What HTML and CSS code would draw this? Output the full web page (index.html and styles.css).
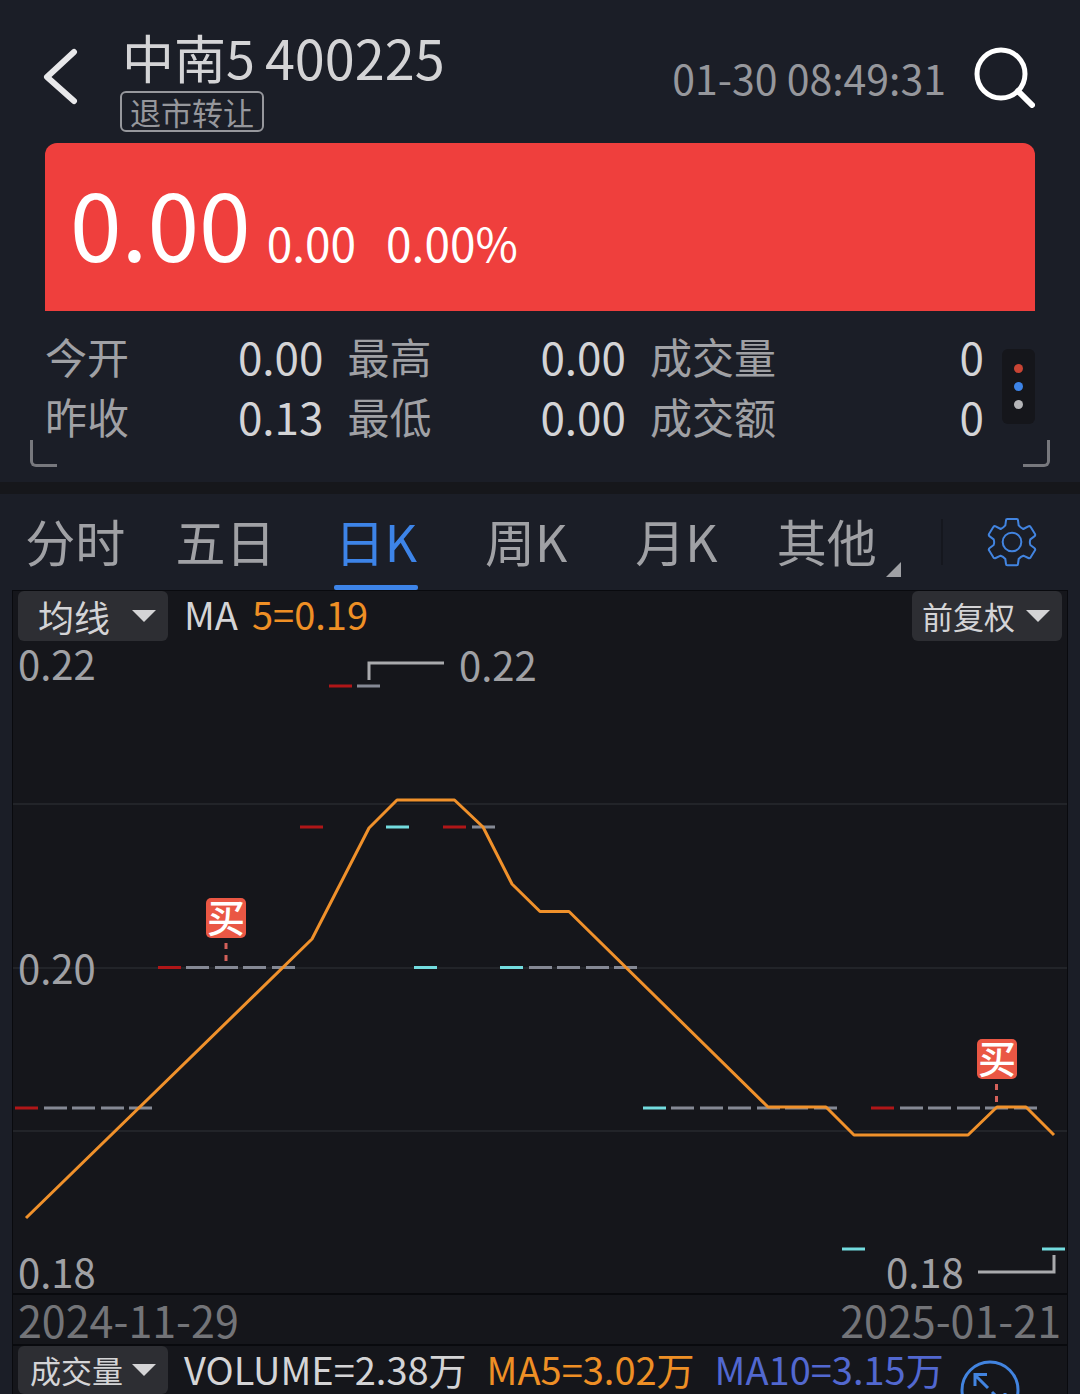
FILE: index.html
```html
<!DOCTYPE html>
<html lang="zh-CN">
<head>
<meta charset="utf-8">
<meta name="viewport" content="width=device-width, initial-scale=1">
<title>中南5 400225</title>
<link rel="stylesheet" href="styles.css">
</head>
<body>
<header class="topbar">
  <button class="icon-btn back" aria-label="返回">
    <svg width="36" height="60" viewBox="0 0 36 60"><path d="M31 5 4 30 31 54" fill="none" stroke="#e8e8ea" stroke-width="6" stroke-linecap="round" stroke-linejoin="round"/></svg>
  </button>
  <div class="identity">
    <h1 class="title"><span class="name">中南5</span><span class="code">400225</span></h1>
    <span class="tag">退市转让</span>
  </div>
  <time class="clock">01-30 08:49:31</time>
  <button class="icon-btn search" aria-label="搜索">
    <svg width="62" height="62" viewBox="0 0 62 62"><g fill="none" stroke="#fff" stroke-width="5" stroke-linecap="round"><circle cx="28" cy="28" r="24"/><path d="M45 45 59 59" stroke-width="6"/></g></svg>
  </button>
</header>

<main>
  <section class="quote">
    <div class="price-card">
      <span class="price">0.00</span>
      <span class="change">0.00</span>
      <span class="change percent">0.00%</span>
    </div>
    <div class="stats">
      <dl class="stat-list">
        <div class="stat"><dt>今开</dt><dd>0.00</dd></div>
        <div class="stat"><dt>最高</dt><dd>0.00</dd></div>
        <div class="stat"><dt>成交量</dt><dd>0</dd></div>
        <div class="stat"><dt>昨收</dt><dd>0.13</dd></div>
        <div class="stat"><dt>最低</dt><dd>0.00</dd></div>
        <div class="stat"><dt>成交额</dt><dd>0</dd></div>
      </dl>
      <button class="more" aria-label="更多"><i class="dot dot-red"></i><i class="dot dot-blue"></i><i class="dot dot-gray"></i></button>
    </div>
    <i class="corner corner-left"></i>
    <i class="corner corner-right"></i>
  </section>

  <nav class="tabs">
    <div class="tab-list">
      <button class="tab">分时</button>
      <button class="tab">五日</button>
      <button class="tab tab-active">日K</button>
      <button class="tab">周K</button>
      <button class="tab">月K</button>
      <button class="tab tab-more">其他</button>
    </div>
    <button class="settings" aria-label="设置">
      <svg width="54" height="54" viewBox="72 105 162 162"><g fill="none" stroke="#4284e0" stroke-width="6" stroke-linejoin="round"><path d="M139 117H167Q171 117 171 121L173 136Q180 144 187 147L202 139Q206 137 209 141L222 162Q224 166 220 169L208 178Q205 187 208 195L220 204Q224 207 222 211L209 232Q206 236 202 234L187 227Q180 229 173 237L171 252Q171 256 167 256H139Q135 256 135 252L133 237Q126 229 119 227L104 234Q100 236 97 232L84 211Q82 207 86 204L98 195Q101 187 98 178L86 169Q82 166 84 162L97 141Q100 137 104 139L119 147Q126 144 133 136L135 121Q135 117 139 117Z"/><circle cx="153" cy="186" r="28"/></g></svg>
    </button>
  </nav>

  <section class="chart">
    <div class="indicator-row">
      <button class="picker picker-ma">均线<i class="caret"></i></button>
      <span class="value">MA</span>
      <span class="value ma5">5=0.19</span>
      <button class="picker picker-adjust">前复权<i class="caret"></i></button>
    </div>
    <svg class="plot" viewBox="13 641 1054 652" role="img" aria-label="日K">
      <g stroke="#222429" stroke-width="2"><path d="M13 804H1067M13 968H1067M13 1131H1067"/></g>
      <g fill="none" stroke-width="3">
        <path stroke="#b01618" d="M15 1108h23M158 967.500h23M300 827h23M329 686h23M443 827h23M871 1108h23"/>
        <path stroke="#858995" d="M44 1108h23M72 1108h23M101 1108h23M129 1108h23M186 967.500h23M215 967.500h23M243 967.500h23M272 967.500h23M357 686h23M472 827h23M529 967.500h23M557 967.500h23M586 967.500h23M614 967.500h23M671 1108h23M700 1108h23M728 1108h23M757 1108h23M785 1108h23M814 1108h23M900 1108h23M928 1108h23M957 1108h23M985 1108h23M1014 1108h23"/>
        <path stroke="#73dcdf" d="M386 827h23M414 967.500h23M500 967.500h23M643 1108h23M842 1249h23M1042 1249h23"/>
        <path stroke="#a9aaad" d="M369 680V663H444M978 1272H1054V1255"/>
        <path stroke="#d4605a" stroke-dasharray="6 6" d="M226 943V962M996.500 1084V1103"/>
        <polyline stroke="#f0912b" stroke-linejoin="round" points="26,1218 312,939 369,828 397,800 454.500,800 483,827 512,884 540,911.500 569,911.500 768,1107 826,1107 854,1135 968,1135 997,1107 1026,1107 1054,1135"/>
      </g>
      <g fill="#ea5744"><rect x="206" y="898" width="40" height="40" rx="5"/><rect x="977" y="1039" width="40" height="40" rx="5"/></g>
      <g class="marker" text-anchor="middle"><text x="226" y="932">买</text><text x="997" y="1073">买</text></g>
      <g class="axis">
        <text x="18" y="680">0.22</text>
        <text x="18" y="984">0.20</text>
        <text x="18" y="1288">0.18</text>
        <text x="459" y="681">0.22</text>
        <text x="886" y="1288">0.18</text>
      </g>
    </svg>
    <div class="dates"><time>2024-11-29</time><time>2025-01-21</time></div>
    <div class="volume-row">
      <button class="picker picker-volume">成交量<i class="caret"></i></button>
      <span class="value">VOLUME=2.38万</span>
      <span class="value ma5">MA5=3.02万</span>
      <span class="value ma10">MA10=3.15万</span>
      <button class="expand" aria-label="全屏">
        <svg width="60" height="60" viewBox="0 0 60 60"><g fill="none" stroke="#4284e0" stroke-width="3"><circle cx="30" cy="30" r="28"/><path d="M15 26V14.500H27M15 15 28 28M32 32 45 45M45 33V45H33"/></g></svg>
      </button>
    </div>
  </section>
</main>
</body>
</html>
```
FILE: styles.css
```css
* {
  box-sizing: border-box;
}

body {
  margin: 0;
  background: #1b1e27;
  color: #d4d4d6;
  font-family: "Noto Sans CJK SC", "Noto Sans", sans-serif;
}

button {
  margin: 0;
  padding: 0;
  border: 0;
  background: none;
  color: inherit;
  font: inherit;
}

svg {
  display: block;
}

/* Top bar */
.topbar {
  display: flex;
  align-items: flex-start;
  padding: 25px 45px 11px 43px;
}

.back {
  margin: 22px 41px 0 0;
}

.identity {
  flex: 1;
}

.title {
  display: flex;
  align-items: center;
  gap: 10px;
  margin: 0 0 2px;
  padding-left: 2px;
  font-weight: 400;
  line-height: 64px;
}

.name {
  font-size: 52px;
}

.code {
  font-size: 54px;
}

.tag {
  display: block;
  width: max-content;
  padding: 0 8px;
  border: 2px solid #96979c;
  border-radius: 6px;
  color: #96979c;
  font-size: 31px;
  line-height: 37px;
}

.clock {
  margin-right: 27px;
  color: #96979c;
  font-size: 41px;
  line-height: 104px;
}

.search {
  margin-top: 21px;
}

/* Quote */
.quote {
  position: relative;
  padding: 0 45px 36px;
  border-bottom: 12px solid #16171b;
}

.price-card {
  display: flex;
  align-items: baseline;
  height: 168px;
  border-radius: 12px 12px 0 0;
  padding: 0 25px;
  background: #ef3f3d;
  color: #fff;
  line-height: 158px;
}

.price {
  font-size: 93px;
}

.change {
  margin-left: 16px;
  font-size: 46px;
}

.percent {
  margin-left: 30px;
}

.stats {
  display: flex;
  align-items: center;
  gap: 18px;
  padding-top: 15px;
}

.stat-list {
  display: grid;
  flex: 1;
  grid-template-columns: 5fr 5fr 6fr;
  column-gap: 24px;
  margin: 0;
}

.stat {
  display: flex;
  justify-content: space-between;
  line-height: 60px;
}

.stat dt {
  color: #a0a1a5;
  font-size: 42px;
}

.stat dd {
  margin: 0;
  font-size: 44px;
}

.more {
  display: flex;
  flex-direction: column;
  align-items: center;
  justify-content: center;
  gap: 9px;
  width: 33px;
  height: 75px;
  border-radius: 6px;
  background: #15161b;
}

.dot {
  width: 9px;
  height: 9px;
  border-radius: 50%;
}

.dot-red {
  background: #c84434;
}

.dot-blue {
  background: #3d84e8;
}

.dot-gray {
  background: #b4b5b8;
}

.corner {
  position: absolute;
  bottom: 15px;
  width: 27px;
  height: 27px;
  border-bottom: 3px solid #77787d;
}

.corner-left {
  left: 30px;
  border-left: 3px solid #77787d;
  border-bottom-left-radius: 6px;
}

.corner-right {
  right: 30px;
  border-right: 3px solid #77787d;
  border-bottom-right-radius: 6px;
}

/* Period tabs */
.tabs {
  display: flex;
  align-items: center;
}

.tab-list {
  display: grid;
  flex: 1;
  grid-template-columns: repeat(6, 1fr);
  margin-right: 39px;
}

.tab {
  position: relative;
  height: 96px;
  padding-bottom: 4px;
  color: #a0a1a5;
  font-size: 50px;
  line-height: 92px;
}

.tab-active {
  color: #3d84e8;
}

.tab-active::after {
  content: "";
  position: absolute;
  bottom: 0;
  left: calc(50% - 42px);
  width: 84px;
  height: 5px;
  border-radius: 2px;
  background: #3d84e8;
}

.tab-more::after {
  content: "";
  position: absolute;
  right: 1px;
  bottom: 13px;
  border-bottom: 15px solid #a0a1a5;
  border-left: 15px solid transparent;
}

.settings {
  display: flex;
  align-items: center;
  justify-content: center;
  width: 139px;
  height: 46px;
  border-left: 2px solid #15171e;
}

/* Chart */
.chart {
  margin: 0 12px;
  border: 1px solid #090a0e;
  border-bottom: 0;
  background: #15161b;
}

.indicator-row,
.volume-row {
  display: flex;
  align-items: flex-start;
  height: 50px;
  padding: 0 5px;
}

.picker {
  display: flex;
  flex: none;
  align-items: center;
  justify-content: space-between;
  width: 150px;
  height: 50px;
  padding: 0 12px;
  border-radius: 6px;
  background: #2d2e33;
  font-size: 31px;
  line-height: 48px;
}

.picker-ma {
  margin-right: 16px;
  padding-left: 20px;
  font-size: 36px;
}

.picker-adjust {
  margin-left: auto;
  padding-left: 10px;
}

.picker-volume {
  height: 48px;
  margin-right: 16px;
}

.caret {
  border-top: 12px solid #d4d4d6;
  border-right: 12px solid transparent;
  border-left: 12px solid transparent;
}

.value {
  margin-right: 14px;
  font-size: 38px;
  line-height: 46px;
  white-space: nowrap;
}

.ma5 {
  color: #ee8f25;
}

.ma10 {
  color: #5268d0;
}

.plot {
  width: 100%;
  height: auto;
  overflow: visible;
}

.axis {
  fill: #a0a1a5;
  font-size: 40px;
}

.marker {
  fill: #fff;
  font-size: 38px;
  font-weight: 500;
}

.dates {
  display: flex;
  justify-content: space-between;
  padding: 0 6px 0 5px;
  border-top: 2px solid #090a0e;
  border-bottom: 2px solid #090a0e;
  color: #737478;
  font-size: 43px;
  line-height: 49px;
}

.volume-row {
  position: relative;
  height: 48px;
  overflow: hidden;
}

.volume-row .value {
  margin-right: 20px;
}

.expand {
  position: absolute;
  top: 14px;
  right: 47px;
}
```
